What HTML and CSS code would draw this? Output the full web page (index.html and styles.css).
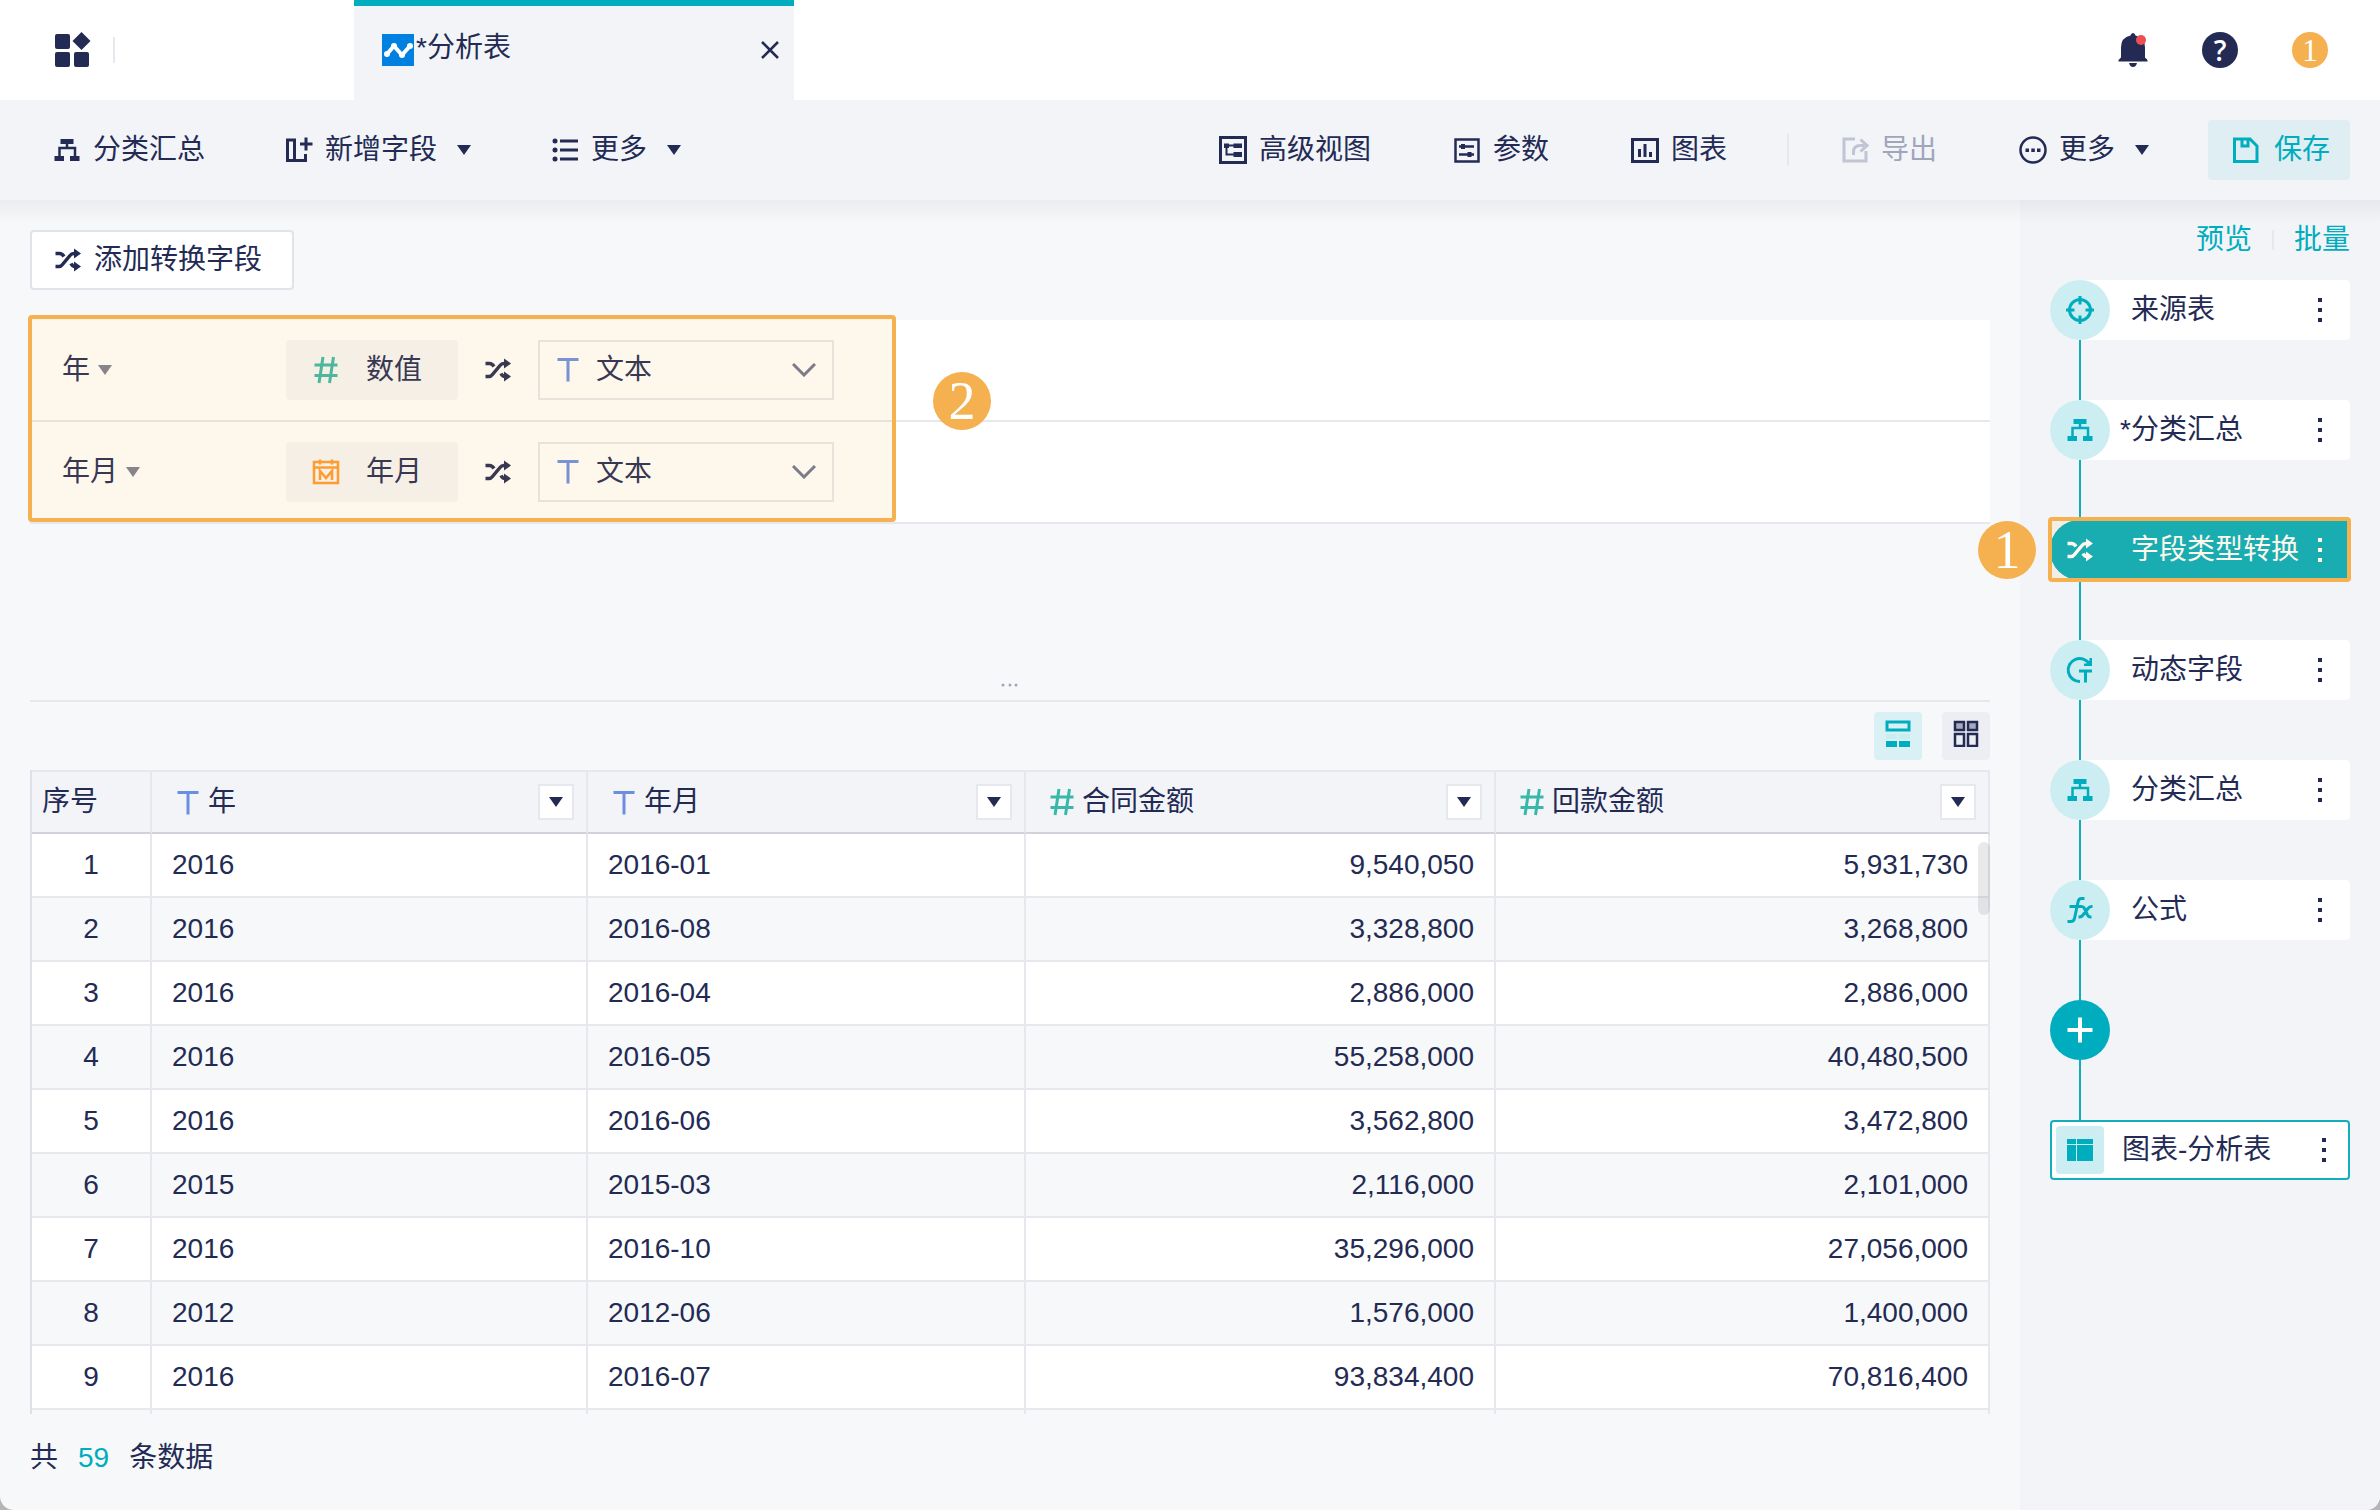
FILE: index.html
```html
<!DOCTYPE html>
<html lang="zh-CN">
<head>
  <meta charset="UTF-8" />
  <meta name="viewport" content="width=device-width, initial-scale=1" />
  <title>分析表</title>
  <link rel="stylesheet" href="styles.css">
</head>
<body>

  <!-- Iconos compartidos -->
  <svg class="sprite" aria-hidden="true">
    <symbol id="i-group" viewBox="0 0 28 28">
      <path d="M7.500 3h13v5h-13zM1.500 20h9.500v5h-9.500zM17 20h9.500v5h-9.500z" fill="currentColor"/>
      <path d="M6.500 20v-8h15.500v8M14 8v4" fill="none" stroke="currentColor" stroke-width="2.500"/>
    </symbol>
    <symbol id="i-shuffle" viewBox="0 0 28 28">
      <path d="M1.500 7.500h4q2.500 0 4.500 3M1.500 20.500h3.500q2 0 3.500-2l7.500-9q1.500-2 4-2h1M17 17.500q1.500 3 4 3" fill="none" stroke="currentColor" stroke-width="3.500"/>
      <path d="M20 2.500l7 5-7 5zM20 15.500l7 5-7 5z" fill="currentColor"/>
    </symbol>
    <symbol id="i-target" viewBox="0 0 28 28">
      <path d="M3.500 14a10.500 10.500 0 1 0 21 0a10.500 10.500 0 1 0-21 0" fill="none" stroke="currentColor" stroke-width="3"/>
      <path d="M14 0v8.500M14 19.500v8.500M0 14h8.500M19.500 14h8.500" stroke="currentColor" stroke-width="3"/>
    </symbol>
    <symbol id="i-dynamic" viewBox="0 0 28 28">
      <path d="M14 25.500a11.500 11.500 0 1 1 9.500-17.500M13 15h13M19.500 15v11.500" fill="none" stroke="currentColor" stroke-width="3"/>
      <path d="M26 2v8h-8v-2.500h2.500l3-3v-2.500z" fill="currentColor"/>
    </symbol>
    <symbol id="i-formula" viewBox="0 0 28 28">
      <path d="M18.500 2.500h-3q-3 0-3.500 3.500l-3.500 16.500q-.8 3-3.500 3h-3.500M3.500 10.500h12q2 0 3 2l3 6.500q1 2 3 2h1M26.500 10.500h-1q-2 0-3.500 2l-5 6.500q-1.500 2-3.500 2h-1" fill="none" stroke="currentColor" stroke-width="3"/>
    </symbol>
    <symbol id="i-addcol" viewBox="0 0 28 28">
      <path d="M2.500 4h7v20.500h-7zM9 24.500h11.500v-6.500M21 1.500v13M15 8h12.500" fill="none" stroke="currentColor" stroke-width="3"/>
    </symbol>
    <symbol id="i-list" viewBox="0 0 28 28">
      <path d="M9 5h18M9 14h18M9 23h18" stroke="currentColor" stroke-width="3"/>
      <circle cx="4" cy="5" r="2.500" fill="currentColor"/>
      <circle cx="4" cy="14" r="2.500" fill="currentColor"/>
      <circle cx="4" cy="23" r="2.500" fill="currentColor"/>
    </symbol>
    <symbol id="i-view" viewBox="0 0 28 28">
      <path d="M1.500 1.500h25v25h-25z" fill="none" stroke="currentColor" stroke-width="3"/>
      <path d="M7.500 9.500v9h8M8 9.500h8" fill="none" stroke="currentColor" stroke-width="2"/>
      <path d="M5 7.500h5v4.500h-5zM14.500 7.500h8.500v4.500h-8.500zM14.500 16h8.500v5h-8.500z" fill="currentColor"/>
    </symbol>
    <symbol id="i-param" viewBox="0 0 28 28">
      <path d="M2.500 3.500h23v22h-23zM6 10.500h15M6 18.500h15" fill="none" stroke="currentColor" stroke-width="2.500"/>
      <path d="M8 8h4v5h-4zM14.500 16h4v5h-4z" fill="currentColor"/>
    </symbol>
    <symbol id="i-chart" viewBox="0 0 28 28">
      <path d="M1.500 3.500h25v22h-25z" fill="none" stroke="currentColor" stroke-width="3"/>
      <path d="M8.500 13v8M14 8v13M19.500 16v5" stroke="currentColor" stroke-width="3"/>
    </symbol>
    <symbol id="i-export" viewBox="0 0 28 28">
      <path d="M14 3h-11v22h22v-10M12.500 19v-3q0-6.500 7-6.500h4" fill="none" stroke="currentColor" stroke-width="3"/>
      <path d="M19.500 3.500l6.500 6-6.500 6" fill="none" stroke="currentColor" stroke-width="3"/>
    </symbol>
    <symbol id="i-more" viewBox="0 0 28 28">
      <circle cx="14" cy="14" r="12.500" fill="none" stroke="currentColor" stroke-width="2.500"/>
      <path d="M6.500 12.500h3.500v3.500h-3.500zM12.300 12.500h3.500v3.500h-3.500zM18 12.500h3.500v3.500h-3.500z" fill="currentColor"/>
    </symbol>
    <symbol id="i-save" viewBox="0 0 28 28">
      <path d="M2.500 3h15.500l7 7v15.500h-22.500zM10 3v7h6v-7" fill="none" stroke="currentColor" stroke-width="3"/>
    </symbol>
    <symbol id="i-text" viewBox="0 0 28 28">
      <path d="M3.500 4.500h21M14 4.500v22" stroke="currentColor" stroke-width="3"/>
    </symbol>
    <symbol id="i-number" viewBox="0 0 28 28">
      <path d="M2.500 9h23M2.500 19.500h23M11 1l-4 26M21.500 1l-4 26" stroke="currentColor" stroke-width="3"/>
    </symbol>
    <symbol id="i-month" viewBox="0 0 28 28">
      <path d="M2 4h24v21h-24zM2 9.500h24M8 1.500v5M20 1.500v5M8 22v-9l6 7 6-7v9" fill="none" stroke="currentColor" stroke-width="2.500"/>
    </symbol>
    <symbol id="i-sheet" viewBox="0 0 28 28">
      <path d="M1 3h9v5h-9zM11 3h16v5h-16zM1 9h9v16h-9zM11 9h16v16h-16z" fill="currentColor"/>
    </symbol>
    <symbol id="i-plus" viewBox="0 0 28 28">
      <path d="M14 1.500v25M1.500 14h25" stroke="currentColor" stroke-width="4"/>
    </symbol>
    <symbol id="i-dots" viewBox="0 0 6 26">
      <path d="M1 1h4v4h-4zM1 11h4v4h-4zM1 21h4v4h-4z" fill="currentColor"/>
    </symbol>
    <symbol id="i-caret" viewBox="0 0 14 10">
      <path d="M0 0h14l-7 10z" fill="currentColor"/>
    </symbol>
  </svg>

  <div class="app">
    <header class="topbar">
      <div class="topbar-home">
        <button class="icon-btn" aria-label="主页">
          <svg width="36" height="36" viewBox="0 0 36 36" fill="currentColor"><rect x="0" y="2" width="15" height="15" rx="2"/><rect x="0" y="20" width="15" height="15" rx="2"/><rect x="19" y="20" width="15" height="15" rx="2"/><path d="M26.500 0l9 9-9 9-9-9z"/></svg>
        </button>
        <span class="divider"></span>
      </div>
      <div class="tab">
        <svg width="32" height="32" viewBox="0 0 32 32"><path d="M0 0h32v32h-32z" fill="#0081e0"/><path d="M5 20l7-8 8 9 8-9" fill="none" stroke="#fff" stroke-width="4" stroke-linejoin="round"/><circle cx="5" cy="20" r="3" fill="#fff"/><circle cx="12" cy="12" r="3" fill="#fff"/><circle cx="20" cy="21" r="3" fill="#fff"/><circle cx="28" cy="12" r="3" fill="#fff"/></svg>
        <span class="tab-name">*分析表</span>
        <button class="icon-btn" aria-label="关闭">
          <svg width="18" height="18" viewBox="0 0 18 18"><path d="M1 1l16 16M17 1l-16 16" stroke="currentColor" stroke-width="2.500"/></svg>
        </button>
      </div>
      <div class="topbar-user">
        <button class="icon-btn" aria-label="消息">
          <svg width="30" height="36" viewBox="0 0 30 36"><path d="M15 1q2 0 2.500 2.500q9.500 2 9.500 12v10l2.500 2.500v1.500h-29v-1.500l2.500-2.500v-10q0-10 9.500-12q.5-2.500 2.500-2.500zM11 31h8q-1 4-4 4t-4-4z" fill="currentColor"/><circle cx="23" cy="8" r="5" fill="#ec5050"/></svg>
        </button>
        <button class="help" aria-label="帮助">?</button>
        <span class="badge badge-small">1</span>
      </div>
    </header>

    <nav class="toolbar">
      <div class="tools">
        <button class="tool"><svg class="icon"><use href="#i-group"/></svg>分类汇总</button>
        <button class="tool"><svg class="icon"><use href="#i-addcol"/></svg>新增字段<svg class="caret"><use href="#i-caret"/></svg></button>
        <button class="tool"><svg class="icon"><use href="#i-list"/></svg>更多<svg class="caret"><use href="#i-caret"/></svg></button>
      </div>
      <div class="tools tools-right">
        <button class="tool"><svg class="icon"><use href="#i-view"/></svg>高级视图</button>
        <button class="tool"><svg class="icon"><use href="#i-param"/></svg>参数</button>
        <button class="tool"><svg class="icon"><use href="#i-chart"/></svg>图表</button>
        <button class="tool tool-export" disabled><svg class="icon"><use href="#i-export"/></svg>导出</button>
        <button class="tool"><svg class="icon"><use href="#i-more"/></svg>更多<svg class="caret"><use href="#i-caret"/></svg></button>
        <button class="tool save"><svg class="icon"><use href="#i-save"/></svg>保存</button>
      </div>
    </nav>

    <div class="content">
      <main class="work">
        <button class="add-field"><svg class="icon"><use href="#i-shuffle"/></svg>添加转换字段</button>

        <div class="convert">
          <div class="convert-row">
            <button class="field">年<svg class="caret"><use href="#i-caret"/></svg></button>
            <span class="type"><svg class="icon c-number"><use href="#i-number"/></svg>数值</span>
            <svg class="icon"><use href="#i-shuffle"/></svg>
            <label class="target">
              <svg class="icon c-text"><use href="#i-text"/></svg>
              <select aria-label="年"><option>文本</option></select>
              <svg class="chevron" viewBox="0 0 24 14"><path d="M1 1l11 11 11-11" fill="none" stroke="currentColor" stroke-width="3"/></svg>
            </label>
          </div>
          <div class="convert-row">
            <button class="field">年月<svg class="caret"><use href="#i-caret"/></svg></button>
            <span class="type"><svg class="icon c-month"><use href="#i-month"/></svg>年月</span>
            <svg class="icon"><use href="#i-shuffle"/></svg>
            <label class="target">
              <svg class="icon c-text"><use href="#i-text"/></svg>
              <select aria-label="年月"><option>文本</option></select>
              <svg class="chevron" viewBox="0 0 24 14"><path d="M1 1l11 11 11-11" fill="none" stroke="currentColor" stroke-width="3"/></svg>
            </label>
          </div>
          <div class="mark mark-convert"></div>
          <span class="badge badge-convert">2</span>
        </div>

        <div class="splitter"><svg width="18" height="4" viewBox="0 0 18 4" fill="currentColor"><circle cx="2" cy="2" r="1.500"/><circle cx="9" cy="2" r="1.500"/><circle cx="15" cy="2" r="1.500"/></svg></div>

        <div class="view-switch">
          <button class="view active" aria-label="表格视图">
            <svg width="28" height="28" viewBox="0 0 28 28"><path d="M3 3h22v8h-22z" fill="none" stroke="currentColor" stroke-width="3"/><path d="M2 15h11v5h-11zM15 15h11v5h-11z" fill="#c9eef2"/><path d="M2 22h11v6h-11zM15 22h11v6h-11z" fill="currentColor"/></svg>
          </button>
          <button class="view" aria-label="网格视图">
            <svg width="28" height="28" viewBox="0 0 28 28"><path d="M3 3h9v8h-9zM16 3h9v8h-9z" fill="#a6a9bc" stroke="currentColor" stroke-width="2.500"/><path d="M3 15h9v12h-9zM16 15h9v12h-9z" fill="none" stroke="currentColor" stroke-width="2.500"/></svg>
          </button>
        </div>

        <div class="table-box">
          <table class="data">
            <colgroup><col class="col-no"><col class="col-year"><col class="col-month"><col class="col-sum"><col class="col-paid"></colgroup>
            <thead>
              <tr>
                <th>序号</th>
                <th><div class="head"><svg class="icon c-text"><use href="#i-text"/></svg>年<button class="filter" aria-label="筛选年"><svg class="caret"><use href="#i-caret"/></svg></button></div></th>
                <th><div class="head"><svg class="icon c-text"><use href="#i-text"/></svg>年月<button class="filter" aria-label="筛选年月"><svg class="caret"><use href="#i-caret"/></svg></button></div></th>
                <th><div class="head"><svg class="icon c-number"><use href="#i-number"/></svg>合同金额<button class="filter" aria-label="筛选合同金额"><svg class="caret"><use href="#i-caret"/></svg></button></div></th>
                <th><div class="head"><svg class="icon c-number"><use href="#i-number"/></svg>回款金额<button class="filter" aria-label="筛选回款金额"><svg class="caret"><use href="#i-caret"/></svg></button></div></th>
              </tr>
            </thead>
            <tbody>
              <tr><td>1</td><td>2016</td><td>2016-01</td><td>9,540,050</td><td>5,931,730</td></tr>
              <tr><td>2</td><td>2016</td><td>2016-08</td><td>3,328,800</td><td>3,268,800</td></tr>
              <tr><td>3</td><td>2016</td><td>2016-04</td><td>2,886,000</td><td>2,886,000</td></tr>
              <tr><td>4</td><td>2016</td><td>2016-05</td><td>55,258,000</td><td>40,480,500</td></tr>
              <tr><td>5</td><td>2016</td><td>2016-06</td><td>3,562,800</td><td>3,472,800</td></tr>
              <tr><td>6</td><td>2015</td><td>2015-03</td><td>2,116,000</td><td>2,101,000</td></tr>
              <tr><td>7</td><td>2016</td><td>2016-10</td><td>35,296,000</td><td>27,056,000</td></tr>
              <tr><td>8</td><td>2012</td><td>2012-06</td><td>1,576,000</td><td>1,400,000</td></tr>
              <tr><td>9</td><td>2016</td><td>2016-07</td><td>93,834,400</td><td>70,816,400</td></tr>
              <tr class="rest"><td></td><td></td><td></td><td></td><td></td></tr>
            </tbody>
          </table>
          <div class="scroll-thumb"></div>
        </div>

        <p class="total"><span>共</span><span class="total-count">59</span><span>条数据</span></p>
      </main>

      <aside class="steps">
        <div class="steps-links"><a href="#">预览</a><span class="divider"></span><a href="#">批量</a></div>
        <ol class="step-list">
          <li class="step"><span class="step-icon"><svg class="icon"><use href="#i-target"/></svg></span><a class="step-name" href="#">来源表</a><button class="dots" aria-label="来源表菜单"><svg><use href="#i-dots"/></svg></button></li>
          <li class="step changed"><span class="step-icon"><svg class="icon"><use href="#i-group"/></svg></span><a class="step-name" href="#">*分类汇总</a><button class="dots" aria-label="分类汇总菜单"><svg><use href="#i-dots"/></svg></button></li>
          <li class="step current"><span class="step-icon"><svg class="icon"><use href="#i-shuffle"/></svg></span><a class="step-name" href="#">字段类型转换</a><button class="dots" aria-label="字段类型转换菜单"><svg><use href="#i-dots"/></svg></button>
            <div class="mark mark-step"></div>
            <span class="badge badge-step">1</span>
          </li>
          <li class="step"><span class="step-icon"><svg class="icon"><use href="#i-dynamic"/></svg></span><a class="step-name" href="#">动态字段</a><button class="dots" aria-label="动态字段菜单"><svg><use href="#i-dots"/></svg></button></li>
          <li class="step"><span class="step-icon"><svg class="icon"><use href="#i-group"/></svg></span><a class="step-name" href="#">分类汇总</a><button class="dots" aria-label="分类汇总菜单"><svg><use href="#i-dots"/></svg></button></li>
          <li class="step"><span class="step-icon"><svg class="icon"><use href="#i-formula"/></svg></span><a class="step-name" href="#">公式</a><button class="dots" aria-label="公式菜单"><svg><use href="#i-dots"/></svg></button></li>
          <li class="step step-add"><button class="step-icon" aria-label="添加步骤"><svg class="icon"><use href="#i-plus"/></svg></button></li>
          <li class="step output"><span class="step-icon"><svg class="icon"><use href="#i-sheet"/></svg></span><a class="step-name" href="#">图表-分析表</a><button class="dots" aria-label="图表菜单"><svg><use href="#i-dots"/></svg></button></li>
        </ol>
      </aside>
    </div>
  </div>

</body>
</html>
```
FILE: styles.css
```css
* {
  box-sizing: border-box;
}
html {
  background: #b4b5b7;
}
body {
  margin: 0;
  font-family: "Liberation Sans", "Noto Sans CJK SC", sans-serif;
  font-size: 28px;
  line-height: 40px;
  color: #232b54;
}
button, select {
  font: inherit;
  color: inherit;
  background: none;
  border: none;
  padding: 0;
  margin: 0;
  cursor: pointer;
}
a {
  color: inherit;
  text-decoration: none;
}
.sprite {
  display: none;
}
.icon {
  width: 28px;
  height: 28px;
  flex: none;
}
.caret {
  width: 14px;
  height: 10px;
  flex: none;
}
.c-text {
  color: #6b8fe0;
}
.c-number {
  color: #39b8a8;
}
.c-month {
  color: #ff9a2e;
}
.divider {
  width: 2px;
  height: 26px;
  background: #e6e8ed;
}
.icon-btn {
  display: flex;
}
.app {
  display: flex;
  flex-direction: column;
  min-height: 100vh;
  background: #f7f8fa;
  border-radius: 0 0 14px 14px;
  overflow: hidden;
}

/* Cabecera */
.topbar {
  display: flex;
  height: 100px;
  background: #fff;
}
.topbar-home {
  display: flex;
  align-items: center;
  gap: 22px;
  width: 354px;
  padding-left: 55px;
}
.tab {
  display: flex;
  align-items: center;
  width: 440px;
  padding: 0 15px 6px 28px;
  border-top: 6px solid #00adbe;
  background: #f2f4f8;
}
.tab-name {
  flex: 1;
  padding: 0 0 4px 2px;
}
.topbar-user {
  display: flex;
  align-items: center;
  gap: 54px;
  margin-left: auto;
  padding-right: 52px;
}
.help {
  width: 36px;
  height: 36px;
  border-radius: 50%;
  background: #232b54;
  color: #fff;
  font-family: "Open Sans", sans-serif;
  font-size: 28px;
  line-height: 36px;
  font-weight: 600;
}
.badge {
  display: block;
  width: 58px;
  height: 58px;
  border-radius: 50%;
  background: #f5b04f;
  color: #fff;
  font-family: "Liberation Serif", serif;
  font-size: 54px;
  line-height: 58px;
  text-align: center;
}
.badge-small {
  width: 36px;
  height: 36px;
  font-size: 32px;
  line-height: 36px;
}

/* Barra de herramientas */
.toolbar {
  position: relative;
  display: flex;
  justify-content: space-between;
  align-items: center;
  height: 100px;
  padding: 0 30px 0 53px;
  background: #f2f4f8;
}
/* sombra solo hacia abajo */
.toolbar::after {
  content: "";
  position: absolute;
  left: 0;
  right: 0;
  top: 100%;
  height: 24px;
  background: linear-gradient(rgba(35, 43, 60, 0.06), rgba(35, 43, 60, 0));
  pointer-events: none;
}
.tools {
  display: flex;
  align-items: center;
  gap: 80px;
}
.tools-right {
  gap: 82px;
}
.tool {
  display: flex;
  align-items: center;
  gap: 12px;
}
.tool .caret {
  margin-left: 8px;
}
.tool-export {
  color: #a0a5bc;
  margin-left: -22px;
}
.tool-export::before {
  content: "";
  width: 2px;
  height: 32px;
  margin-right: 40px;
  background: #e6e8ed;
}
.tool-export .icon {
  opacity: 0.6;
}
.save {
  height: 60px;
  margin-left: -23px;
  padding: 0 20px 0 24px;
  gap: 14px;
  border-radius: 4px;
  background: #dfeef3;
  color: #00adbe;
}

/* Zona de trabajo */
.content {
  display: flex;
  flex: 1;
}
.work {
  flex: 1;
  padding: 30px 30px 0;
}
.add-field {
  display: flex;
  align-items: center;
  gap: 12px;
  height: 60px;
  padding: 0 30px 0 22px;
  background: #fff;
  border: 2px solid #e1e3ea;
  border-radius: 4px;
}
.convert {
  position: relative;
  margin-top: 30px;
}
.convert-row {
  display: flex;
  align-items: center;
  height: 102px;
  padding-left: 32px;
  background: #fff;
  border-bottom: 2px solid #e6e8ed;
}
.field {
  display: flex;
  align-items: center;
  gap: 8px;
  width: 224px;
}
.field .caret {
  color: #7c7f93;
}
.type {
  display: flex;
  align-items: center;
  gap: 26px;
  width: 172px;
  height: 60px;
  margin-right: 26px;
  padding-left: 26px;
  border-radius: 4px;
  background: #f5f6f8;
}
.target {
  position: relative;
  margin-left: 26px;
}
.target .icon {
  position: absolute;
  left: 16px;
  top: 15px;
}
.target select {
  display: block;
  appearance: none;
  width: 296px;
  height: 60px;
  padding-left: 56px;
  border: 2px solid #e6e8ed;
}
.target .chevron {
  position: absolute;
  right: 18px;
  top: 23px;
  width: 24px;
  height: 14px;
  color: #6f7690;
  pointer-events: none;
}
.mark {
  position: absolute;
  border: 4px solid #f5b04f;
  border-radius: 4px;
  background: rgba(250, 175, 70, 0.1);
  pointer-events: none;
}
.mark-convert {
  left: -2px;
  top: -5px;
  width: 868px;
  height: 207px;
}
.badge-convert {
  position: absolute;
  left: 903px;
  top: 52px;
}
.splitter {
  display: flex;
  justify-content: center;
  align-items: flex-end;
  height: 178px;
  padding-bottom: 13px;
  border-bottom: 2px solid #e6e8ed;
  color: #a0a5bc;
}
.view-switch {
  display: flex;
  justify-content: flex-end;
  gap: 20px;
  padding: 10px 0;
}
.view {
  display: flex;
  justify-content: center;
  width: 48px;
  height: 48px;
  padding-top: 7px;
  border-radius: 4px;
  background: #edeef3;
}
.view.active {
  background: #d9f0f4;
  color: #00adbe;
}

/* Tabla de datos */
.table-box {
  position: relative;
}
.data {
  width: 100%;
  table-layout: fixed;
  border-collapse: separate;
  border-spacing: 0;
  border-left: 2px solid #dfe1e9;
}
.col-no {
  width: 120px;
}
.col-year {
  width: 436px;
}
.col-month {
  width: 438px;
}
.col-sum {
  width: 470px;
}
.data th, .data td {
  height: 64px;
  padding: 0 20px;
  border-right: 2px solid #e6e8ed;
  border-bottom: 2px solid #e6e8ed;
  text-align: left;
  font-weight: normal;
}
.data th {
  padding: 0 12px 0 10px;
  background: #f2f4f8;
  border-top: 2px solid #e6e8ed;
  border-bottom-color: #d0d3da;
}
.data td:nth-child(n+4) {
  text-align: right;
}
.data td:first-child {
  text-align: center;
}
.data tbody tr:nth-child(odd) {
  background: #fff;
}
.data tbody .rest td {
  height: 4px;
  border-bottom: none;
}
.head {
  display: flex;
  align-items: center;
  gap: 6px;
  padding-left: 12px;
}
.filter {
  display: flex;
  align-items: center;
  justify-content: center;
  width: 36px;
  height: 36px;
  margin-left: auto;
  background: #fff;
  border: 2px solid #e6e8ed;
}
.scroll-thumb {
  position: absolute;
  right: 0;
  top: 72px;
  width: 12px;
  height: 73px;
  border-radius: 6px;
  background: rgba(35, 43, 60, 0.1);
}
.total {
  display: flex;
  gap: 20px;
  margin: 0;
  padding: 24px 0;
}
.total-count {
  color: #00adbe;
}

/* Panel de pasos */
.steps {
  width: 360px;
  padding: 20px 30px 30px;
  background: #f2f4f8;
}
.steps-links {
  display: flex;
  justify-content: flex-end;
  align-items: center;
  gap: 20px;
  color: #00adbe;
}
.steps-links .divider {
  height: 20px;
}
.step-list {
  display: flex;
  flex-direction: column;
  gap: 60px;
  margin: 20px 0 0;
  padding: 0;
  list-style: none;
}
.step {
  position: relative;
  display: flex;
  align-items: center;
  height: 60px;
  padding-right: 27px;
  border-radius: 30px 4px 4px 30px;
  background: #fff;
}
.step:not(:last-child)::after {
  content: "";
  position: absolute;
  left: 29px;
  top: 60px;
  width: 2px;
  height: 60px;
  background: #12aebb;
}
.step-icon {
  display: flex;
  align-items: center;
  justify-content: center;
  width: 60px;
  height: 60px;
  border-radius: 50%;
  background: #cceef2;
  color: #00adbe;
}
.step-name {
  flex: 1;
  padding-left: 21px;
  white-space: nowrap;
}
.changed .step-name {
  padding-left: 10px;
}
.dots {
  display: flex;
}
.dots svg {
  width: 6px;
  height: 26px;
}
.current, .current .step-icon {
  background: #00adbe;
  color: #fff;
}
.step-add {
  background: none;
}
.step-add .step-icon {
  background: #00adbe;
  color: #fff;
}
.output {
  padding: 0 21px 0 4px;
  border: 2px solid #12aebb;
  border-radius: 4px;
}
.output .step-icon {
  width: 48px;
  height: 48px;
  border-radius: 4px;
}
.output .step-name {
  padding-left: 18px;
}
.mark-step {
  left: -2px;
  top: -3px;
  width: 303px;
  height: 65px;
  z-index: 1;
}
.badge-step {
  position: absolute;
  left: -72px;
  top: 1px;
}
```
